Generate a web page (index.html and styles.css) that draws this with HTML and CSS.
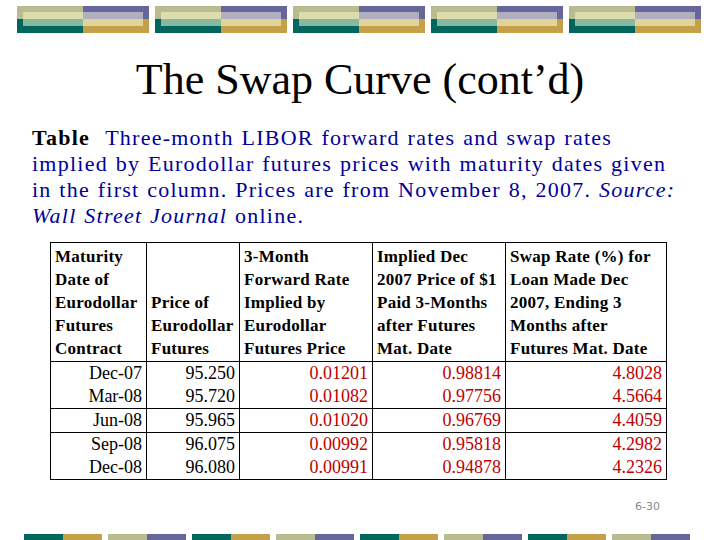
FILE: index.html
```html
<!DOCTYPE html>
<html>
<head>
<meta charset="utf-8">
<link rel="stylesheet" href="styles.css">
</head>
<body>
<div class="slide">
  <div class="topbar">
    <div class="grp"><div class="inner"><div class="l"></div><div class="r"></div></div></div>
    <div class="grp"><div class="inner"><div class="l"></div><div class="r"></div></div></div>
    <div class="grp"><div class="inner"><div class="l"></div><div class="r"></div></div></div>
    <div class="grp"><div class="inner"><div class="l"></div><div class="r"></div></div></div>
    <div class="grp"><div class="inner"><div class="l"></div><div class="r"></div></div></div>
  </div>
  <h1 class="title">The Swap Curve (cont’d)</h1>
  <p class="caption"><b>Table</b>&nbsp; Three-month LIBOR forward rates and swap rates<br>implied by Eurodollar futures prices with maturity dates given<br>in the first column. Prices are from November 8, 2007. <i>Source:</i><br><i>Wall Street Journal</i> online.</p>
  <table class="data">
    <colgroup>
      <col class="c1"><col class="c2"><col class="c3"><col class="c4"><col class="c5">
    </colgroup>
    <thead>
      <tr>
        <th>Maturity<br>Date of<br>Eurodollar<br>Futures<br>Contract</th>
        <th>Price of<br>Eurodollar<br>Futures</th>
        <th>3-Month<br>Forward Rate<br>Implied by<br>Eurodollar<br>Futures Price</th>
        <th>Implied Dec<br>2007 Price of $1<br>Paid 3-Months<br>after Futures<br>Mat. Date</th>
        <th>Swap Rate (%) for<br>Loan Made Dec<br>2007, Ending 3<br>Months after<br>Futures Mat. Date</th>
      </tr>
    </thead>
    <tbody>
      <tr><td>Dec-07</td><td>95.250</td><td class="red">0.01201</td><td class="red">0.98814</td><td class="red">4.8028</td></tr>
      <tr><td>Mar-08</td><td>95.720</td><td class="red">0.01082</td><td class="red">0.97756</td><td class="red">4.5664</td></tr>
    </tbody>
    <tbody>
      <tr><td>Jun-08</td><td>95.965</td><td class="red">0.01020</td><td class="red">0.96769</td><td class="red">4.4059</td></tr>
    </tbody>
    <tbody>
      <tr><td>Sep-08</td><td>96.075</td><td class="red">0.00992</td><td class="red">0.95818</td><td class="red">4.2982</td></tr>
      <tr><td>Dec-08</td><td>96.080</td><td class="red">0.00991</td><td class="red">0.94878</td><td class="red">4.2326</td></tr>
    </tbody>
  </table>
  <div class="footer">
    <div class="pagenum">6-30</div>
    <div class="bottombar">
      <div class="pair a"><span></span><span></span></div>
      <div class="pair b"><span></span><span></span></div>
      <div class="pair a"><span></span><span></span></div>
      <div class="pair b"><span></span><span></span></div>
      <div class="pair a"><span></span><span></span></div>
      <div class="pair b"><span></span><span></span></div>
      <div class="pair a"><span></span><span></span></div>
      <div class="pair b"><span></span><span></span></div>
    </div>
  </div>
</div>
</body>
</html>
```

FILE: styles.css
```css
html, body {
  margin: 0;
  padding: 0;
  background: #ffffff;
}

.slide {
  width: 720px;
  height: 540px;
  display: flex;
  flex-direction: column;
  overflow: hidden;
}

.topbar {
  display: flex;
  gap: 6px;
  padding-left: 17px;
  margin-top: 6px;
}

.grp {
  width: 132px;
  height: 27px;
  box-sizing: border-box;
  padding: 6px 6px 7px;
  background:
    linear-gradient(to bottom, #b8bc90 13px, #00665e 13px) left top / 66px 100% no-repeat,
    linear-gradient(to bottom, #66669c 13px, #c4a048 13px) right top / 66px 100% no-repeat;
}

.inner {
  height: 14px;
  display: flex;
}

.inner .l {
  width: 60px;
  background: linear-gradient(to bottom, #dcdcac 7px, #88b8a0 7px);
}

.inner .r {
  flex: 1;
  background: linear-gradient(to bottom, #b0afc0 7px, #e0d49c 7px);
}

.title {
  margin: 23px 0 0;
  font-family: "Liberation Serif", serif;
  font-weight: normal;
  font-size: 44px;
  line-height: 48px;
  text-align: center;
  color: #000000;
}

.caption {
  margin: 21px 0 0;
  padding-left: 32px;
  font-family: "Liberation Serif", serif;
  font-size: 22px;
  letter-spacing: 1.25px;
  word-spacing: 1px;
  line-height: 26px;
  color: #000099;
  white-space: nowrap;
}

.caption b {
  color: #000000;
}

.data {
  margin: 13px 0 0 50px;
  border-collapse: collapse;
  table-layout: fixed;
  width: 616px;
  font-family: "Liberation Serif", serif;
  border: 1px solid #000000;
}

.c1 { width: 96px; }
.c2 { width: 93px; }
.c3 { width: 133px; }
.c4 { width: 133px; }
.c5 { width: 161px; }

.data th {
  font-size: 17px;
  font-weight: bold;
  line-height: 23px;
  letter-spacing: 0.25px;
  text-align: left;
  vertical-align: bottom;
  padding: 2px 2px 1px 4px;
  border-left: 1px solid #000000;
  border-right: 1px solid #000000;
  border-bottom: 1px solid #000000;
  white-space: nowrap;
}

.data tbody {
  border-bottom: 1px solid #000000;
}

.data td {
  font-size: 18px;
  line-height: 23px;
  text-align: right;
  padding: 0 4px 0 2px;
  border-left: 1px solid #000000;
  border-right: 1px solid #000000;
  color: #000000;
}

.data td.red {
  color: #c00000;
}

.footer {
  margin-top: auto;
}

.pagenum {
  text-align: right;
  padding-right: 60px;
  font-family: "DejaVu Sans", sans-serif;
  font-size: 11px;
  line-height: 14px;
  color: #8a8a8a;
}

.bottombar {
  display: flex;
  gap: 6px;
  padding-left: 24px;
  margin-top: 20px;
  height: 6px;
}

.pair {
  display: flex;
  width: 78px;
}

.pair span {
  width: 39px;
  height: 6px;
}

.pair.a span:first-child { background: #00665e; }
.pair.a span:last-child { background: #c4a048; }
.pair.b span:first-child { background: #b8bc90; }
.pair.b span:last-child { background: #66669c; }
```
